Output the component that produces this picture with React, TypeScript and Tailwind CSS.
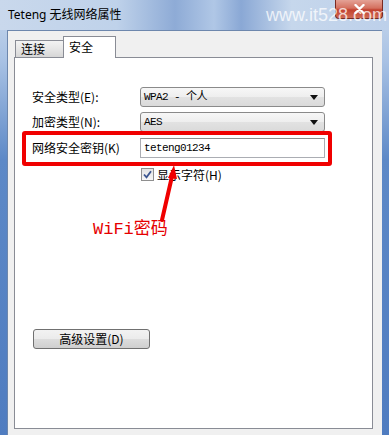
import React from "react";

const cjk = "font-['Noto_Sans_CJK_SC',sans-serif]";
const mono = "font-['Liberation_Mono','Noto_Sans_CJK_SC',monospace]";

function Combo({ value }: { value: string }) {
  return (
    <div className="flex h-[20px] w-[185px] items-center justify-between rounded-[3px] border border-[#8a8a8a] bg-[linear-gradient(#f7f7f7,#eeeeee_50%,#e2e2e2_50%,#dadada)] pl-[3px] pr-[6px]">
      <span className={`${mono} text-[11px] tracking-[-0.6px] text-black`}>{value}</span>
      <svg width="8" height="5" viewBox="0 0 8 5">
        <path d="M0 0h8L4 5z" fill="#111" />
      </svg>
    </div>
  );
}

function Label({ children }: { children: React.ReactNode }) {
  return (
    <span className={`${cjk} w-[108px] shrink-0 text-[12px] leading-none text-black`}>
      {children}
    </span>
  );
}

export default function App() {
  return (
    <div className="relative flex h-[435px] w-[389px] flex-col overflow-hidden bg-[linear-gradient(#c8d8ec,#a9c2e4_60px,#5d89c7_160px,#4f7cc0)]">
      {/* title bar */}
      <div className="flex h-[30px] shrink-0 items-center bg-[linear-gradient(90deg,#c9d8ec_0%,#bfd2ea_30%,#8eabd6_45%,#b0c7e6_55%,#8aa8d5_62%,#c6d7ec_75%,#bdd0ea_100%)] pl-[8px]">
        <span className="font-['Noto_Sans','Noto_Sans_CJK_SC',sans-serif] text-[12px] text-black">
          Teteng 无线网络属性
        </span>
      </div>

      {/* close button */}
      <div className="absolute left-[335px] top-0 flex h-[19px] w-[48px] items-center justify-center rounded-b-[4px] border border-t-0 border-[#7a2a22] bg-[linear-gradient(#e4a296,#d4705f_45%,#c2412f_55%,#cf6b55)]">
        <svg width="11" height="10" viewBox="0 0 11 10">
          <path d="M1.5 1l8 8M9.5 1l-8 8" stroke="#fff" strokeWidth="2.4" strokeLinecap="round" />
        </svg>
      </div>
      <span className="absolute left-[266px] top-[2px] font-['Liberation_Sans',sans-serif] text-[18px] text-white/75">
        www.it528.com
      </span>

      {/* client area */}
      <div className="ml-[7px] mr-[7px] flex flex-1 flex-col border-l border-t border-[#6d87ad] bg-[#f0f0f0] pl-[6px] pr-[9px] pt-[5px]">
        {/* tabs */}
        <div className="flex h-[21px] items-end pl-[1px]">
          <div className={`${cjk} flex h-[17px] w-[48px] items-center border border-b-0 border-r-0 border-[#898c95] bg-[linear-gradient(#f3f3f3,#e6e6e6_50%,#d6d6d6)] pl-[5px] text-[12px] text-black`}>
            连接
          </div>
          <div className={`${cjk} relative z-10 -mb-px flex h-[22px] w-[53px] items-start border border-b-0 border-[#898c95] bg-white pl-[5px] pt-[1px] text-[12px] text-black`}>
            安全
          </div>
        </div>

        {/* panel */}
        <div className="flex h-[372px] flex-col border border-[#898c95] bg-white pl-[17px] pt-[29px]">
          <div className="flex h-[20px] items-center">
            <Label>安全类型(E):</Label>
            <Combo value="WPA2 - 个人" />
          </div>
          <div className="mt-[5px] flex h-[20px] items-center">
            <Label>加密类型(N):</Label>
            <Combo value="AES" />
          </div>
          <div className="mt-[6px] flex h-[20px] items-center">
            <Label>网络安全密钥(K)</Label>
            <div className="flex h-[20px] w-[185px] items-center border border-[#abadb3] border-t-[#8e8f8f] bg-white pl-[3px]">
              <span className={`${mono} text-[11px] tracking-[-0.6px] text-black`}>teteng01234</span>
            </div>
          </div>
          <div className="ml-[109px] mt-[10px] flex h-[13px] items-center gap-[3px]">
            <div className="flex h-[13px] w-[13px] items-center justify-center border border-[#8f8f8f] bg-[linear-gradient(#e3e3e3,#f7f7f7)]">
              <svg width="9" height="9" viewBox="0 0 9 9">
                <path d="M1 4.5l2.5 2.8L8 1.2" fill="none" stroke="#3b5590" strokeWidth="1.8" />
              </svg>
            </div>
            <span className={`${cjk} text-[12px] leading-none text-black`}>显示字符(H)</span>
          </div>

          <div className="ml-[1px] mt-[148px] flex h-[20px] w-[117px] items-center justify-center rounded-[3px] border border-[#707070] bg-[linear-gradient(#f2f2f2,#ebebeb_50%,#dddddd_50%,#cfcfcf)]">
            <span className={`${cjk} text-[12px] leading-none text-black`}>高级设置(D)</span>
          </div>
        </div>
      </div>

      {/* annotations */}
      <div className="absolute left-[22px] top-[131px] h-[35px] w-[310px] rounded-[3px] border-4 border-[#f00000]" />
      <svg className="absolute left-[150px] top-[160px]" width="40" height="70" viewBox="0 0 40 70">
        <path d="M23 12L12 60" stroke="#f00000" strokeWidth="4" strokeLinecap="round" />
        <path d="M24 5L18 18L27 19z" fill="#f00000" />
      </svg>
      <span className={`absolute left-[93px] top-[221px] font-['Liberation_Mono','Noto_Sans_CJK_SC',monospace] text-[17px] leading-none text-[#e60000]`}>
        WiFi密码
      </span>
    </div>
  );
}
